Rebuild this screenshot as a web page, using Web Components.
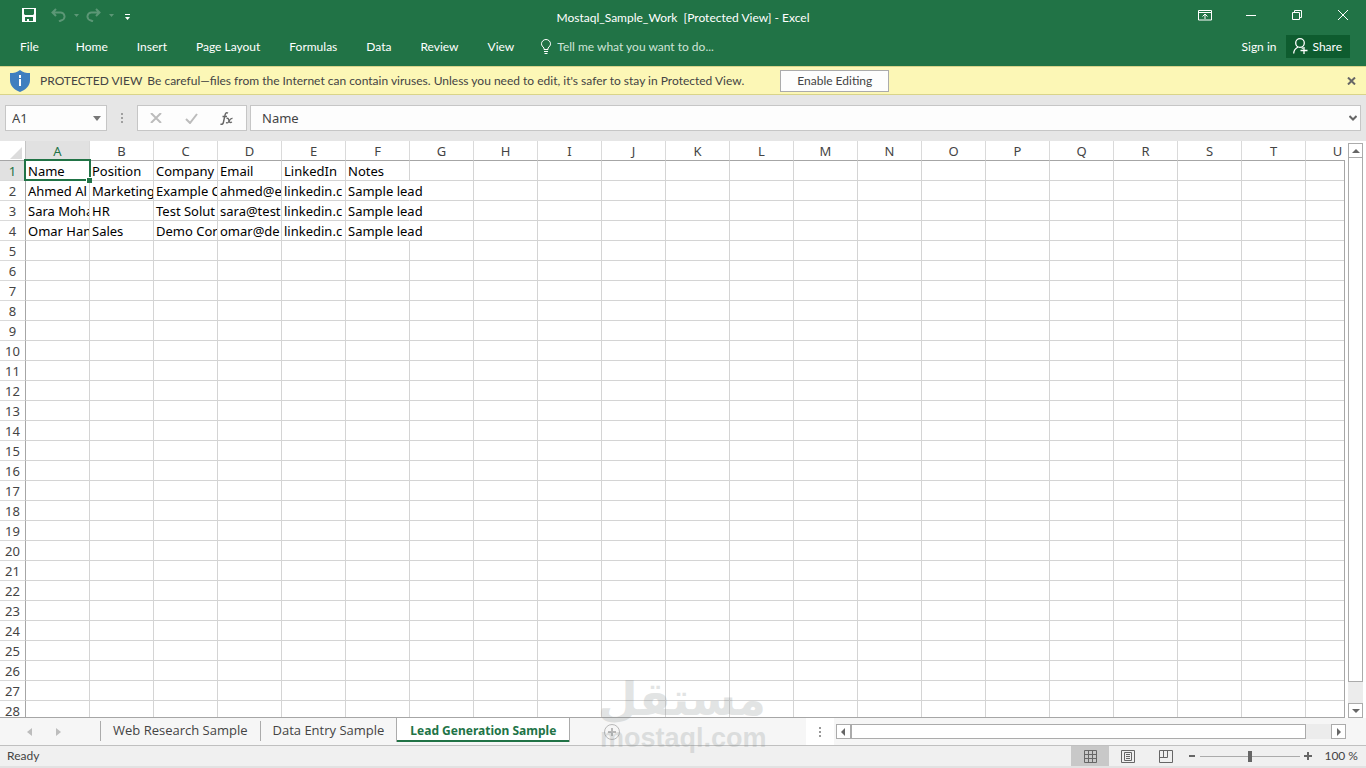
<!DOCTYPE html>
<html lang="en">
<head>
<meta charset="utf-8">
<title>Mostaql_Sample_Work - Excel</title>
<style>
  html, body { margin: 0; height: 100%; }
  body { font-family: Lato, "Noto Sans", sans-serif; font-size: 12px; color: #444; overflow: hidden; }
</style>
</head>
<body>
<excel-app></excel-app>
<script>
const base = `<style>
  *, *::before, *::after { box-sizing: border-box; }
  button { font: inherit; color: inherit; background: none; border: 0; padding: 0; margin: 0; }
  input { font: inherit; color: inherit; background: none; border: 0; padding: 0; margin: 0; min-width: 0; outline: 0; }
  a { color: inherit; text-decoration: none; }
  svg { display: block; fill: none; }
  button { display: flex; align-items: center; justify-content: center; }
</style>`;

function define(name, render) {
  customElements.define(name, class extends HTMLElement {
    constructor() {
      super();
      this.attachShadow({ mode: 'open' });
    }
    connectedCallback() {
      this.shadowRoot.innerHTML = base + render(this);
    }
  });
}

define('title-bar', () => `<style>
  :host { display: grid; grid-template-columns: 1fr auto 1fr; height: 34px; color: #fff; }
  .quick { display: flex; align-items: center; padding: 0 0 4px 22px; }
  .quick .undo { margin-left: 15px; }
  .quick .drop { width: 20px; }
  .quick .more { margin-left: 4px; padding-top: 4px; }
  .title { align-self: center; white-space: pre; }
  .window { display: flex; justify-content: flex-end; height: 30px; }
  .window button { width: 46px; }
</style>
<div class="quick">
  <button aria-label="Save"><svg width="14" height="14"><path fill="#fff" fill-rule="evenodd" d="M0 0h14v14H0zM2 1v5l1 1h8l1-1V1zM3 9v4h2v-2h2v2h4V9z"/></svg></button>
  <button class="undo" aria-label="Undo"><svg width="15" height="14" stroke="#5c9776" stroke-width="2"><path d="M5 1L1.500 4.500L5 8M2 4.500h7a4 4 0 0 1 1 8l-2 1"/></svg></button>
  <button class="drop" aria-label="Undo list"><svg width="5" height="3"><path fill="#5c9776" d="M0 0h5L2.500 3z"/></svg></button>
  <button aria-label="Redo"><svg width="15" height="14" stroke="#5c9776" stroke-width="2"><path d="M10 1l3.500 3.500L10 8M13 4.500H6a4 4 0 0 0-1 8l2 1"/></svg></button>
  <button class="drop" aria-label="Redo list"><svg width="5" height="3"><path fill="#5c9776" d="M0 0h5L2.500 3z"/></svg></button>
  <button class="more" aria-label="Customize"><svg width="5" height="6"><path fill="#fff" d="M0 0h5v1H0zM0 3h5L2.500 6z"/></svg></button>
</div>
<div class="title">Mostaql_Sample_Work  [Protected View] - Excel</div>
<div class="window">
  <button aria-label="Ribbon display options"><svg width="14" height="12" stroke="#fff"><path d="M.5 1.500h13v9.500H.5zM.5 3.500h13M7 10V5M4.500 7.500L7 5l2.500 2.500"/></svg></button>
  <button aria-label="Minimize"><svg width="10" height="1"><path fill="#fff" d="M0 0h10v1H0z"/></svg></button>
  <button aria-label="Restore"><svg width="10" height="10" stroke="#fff"><path d="M.5 2.500h7v7h-7zM2.500 2V.5h7v7H8"/></svg></button>
  <button aria-label="Close"><svg width="10" height="10" stroke="#fff"><path d="M0 0l10 10M10 0L0 10"/></svg></button>
</div>`);

define('ribbon-tabs', () => `<style>
  :host { display: flex; height: 32px; color: #fff; align-items: center; padding-bottom: 8px; }
  nav { display: flex; }
  nav a { padding: 0 29px 0 0; }
  nav a:first-child { padding: 0 37px 0 20px; }
  label { display: flex; align-items: center; gap: 6px; flex: 1; margin-left: -2px; }
  input { flex: 1; }
  input::placeholder { color: #cfe3d7; opacity: 1; }
  .share { background: #0e5c2f; height: 23px; padding: 0 8px 0 7px; gap: 4px; margin: 0 16px 0 10px; }
</style>
<nav><a href="#">File</a><a href="#">Home</a><a href="#">Insert</a><a href="#">Page Layout</a><a href="#">Formulas</a><a href="#">Data</a><a href="#">Review</a><a href="#">View</a></nav>
<label><svg width="10" height="15" stroke="#fff"><path d="M3 10.500V9C1.500 7.500.5 6.500.5 4.800a4.500 4.300 0 0 1 9 0C9.500 6.500 8.500 7.500 7 9v1.500zM3 12.500h4M3.500 14.500h3"/></svg>
<input placeholder="Tell me what you want to do..." aria-label="Tell me what you want to do"></label>
<a href="#">Sign in</a>
<button class="share"><svg width="15" height="16" stroke="#fff" stroke-width="1.300"><circle cx="7" cy="5" r="4.300"/><path d="M.7 15.500c0-3.500 1.500-5 4.300-6.500M8.500 9.500l1.500 1M7.500 12.500h7M11 9v7"/></svg>Share</button>`);

define('message-bar', () => `<style>
  :host { display: flex; align-items: center; height: 29px; background: #fcf7b6; border: solid #d9d48a; border-width: 1px 0; padding: 0 10px; }
  b { font-weight: 400; margin: 0 5px 0 10px; }
  .enable { margin-left: 36px; width: 109px; height: 22px; background: #fdfdfd; border: 1px solid #ababab; }
  .close { margin-left: auto; }
</style>
<svg width="20" height="22"><path fill="#3f7fbf" d="M10 0C7 2.500 4 3 0 3v7c0 6 4 9.500 10 12 6-2.500 10-6 10-12V3c-4 0-7-.5-10-3z"/><path fill="#fff" d="M9 5h2v3H9zM9 9h2v7H9z"/></svg>
<b>PROTECTED VIEW</b><span>Be careful—files from the Internet can contain viruses. Unless you need to edit, it's safer to stay in Protected View.</span>
<button class="enable">Enable Editing</button>
<button class="close" aria-label="Close message"><svg width="9" height="8" stroke="#666" stroke-width="2"><path d="M1 .5l7 7M8 .5l-7 7"/></svg></button>`);

define('formula-bar', () => `<style>
  :host { display: flex; align-items: center; height: 46px; background: #e6e6e6; padding: 0 5px; font-family: "Noto Sans", sans-serif; font-size: 13px; }
  .box { display: flex; align-items: center; height: 26px; background: #fdfdfd; border: 1px solid #c6c6c6; }
  .name { width: 102px; padding: 0 5px 0 6px; }
  .name input { flex: 1; }
  .dots { margin: 0 14px; }
  .tools { width: 110px; justify-content: space-between; padding: 0 12px; margin-right: 3px; }
  .text { flex: 1; padding: 0 3px 0 11px; }
  .text input { flex: 1; }
</style>
<div class="box name"><input value="A1" aria-label="Name box"><button aria-label="Names"><svg width="8" height="5"><path fill="#777" d="M0 0h8L4 5z"/></svg></button></div>
<svg class="dots" width="2" height="10"><path fill="#a0a0a0" d="M0 0h2v2H0zM0 4h2v2H0zM0 8h2v2H0z"/></svg>
<div class="box tools">
  <button aria-label="Cancel"><svg width="12" height="10" stroke="#bcbcbc" stroke-width="2"><path d="M1 0l10 10M11 0L1 10"/></svg></button>
  <button aria-label="Enter"><svg width="13" height="11" stroke="#bcbcbc" stroke-width="2"><path d="M1 6l4 4 7-9"/></svg></button>
  <button aria-label="Insert function"><svg width="14" height="13" stroke="#666"><path stroke-width="1.400" d="M8 1.200C6 0 5.200 1.500 4.800 4L3.500 10C3 12.300 2 12.700.5 12M2.500 4.500h4.500"/><path stroke-width="1.300" d="M6.500 6.500c2-1 2 1 2.500 2.500s1 2 3 1M12.500 6.500c-2-.5-3 2-4 3.500s-1.500 1-2.500.5"/></svg></button>
</div>
<div class="box text"><input value="Name" aria-label="Formula"><button aria-label="Expand formula bar"><svg width="8" height="6" stroke="#666" stroke-width="2"><path d="M.5 1L4 4.500 7.500 1"/></svg></button></div>`);

const rows = [
  ['Name', 'Position', 'Company', 'Email', 'LinkedIn', 'Notes'],
  ['Ahmed Al', 'Marketing', 'Example C', 'ahmed@e', 'linkedin.c', 'Sample lead'],
  ['Sara Moha', 'HR', 'Test Solut', 'sara@test', 'linkedin.c', 'Sample lead'],
  ['Omar Han', 'Sales', 'Demo Cor', 'omar@de', 'linkedin.c', 'Sample lead']
];
const columns = [...'ABCDEFGHIJKLMNOPQRSTU'];

define('sheet-grid', () => `<style>
  :host { display: block; overflow: hidden; min-height: 0; background: #fff; position: relative; border-bottom: 1px solid #a6a6a6; font-family: "Noto Sans", sans-serif; }
  :host::after { content: ""; position: absolute; top: 19px; right: 0; bottom: 0; border-right: 1px solid #a6a6a6; }
  table { table-layout: fixed; border-collapse: separate; border-spacing: 0; width: 1370px; font-size: 13px; line-height: 18px; }
  th, td { padding: 1px 0 0; height: 20px; white-space: nowrap; overflow: hidden; font-weight: 400; }
  col { width: 64px; }
  col:first-child { width: 26px; }
  thead th { border-right: 1px solid #dadada; border-bottom: 1px solid #a6a6a6; text-align: center; }
  thead th:first-child { border-right-color: #c4c4c4; }
  thead svg { margin: 3px 0 0 10px; }
  tbody th { border-right: 1px solid #a6a6a6; border-bottom: 1px solid #dadada; text-align: center; }
  td { border: solid #d4d4d4; border-width: 0 1px 1px 0; padding-left: 2px; color: #000; }
  td.spill { overflow: visible; border-right-color: transparent; }
  td.active { overflow: visible; position: relative; }
  td.active::before { content: ""; position: absolute; inset: -2px -2px -1px -2px; border: 2px solid #217346; }
  td.active::after { content: ""; position: absolute; right: -3px; bottom: -3px; width: 6px; height: 6px; background: #217346; border: solid #fff; border-width: 1px 0 0 1px; }
  th.on { background: #e1e1e1; color: #217346; }
</style>
<table>
  <colgroup><col>${columns.map(() => '<col>').join('')}</colgroup>
  <thead><tr><th><svg width="12" height="12"><path fill="#dcdcdc" d="M12 0v12H0z"/></svg></th>${columns.map((c, i) => `<th scope="col"${i ? '' : ' class="on"'}>${c}</th>`).join('')}</tr></thead>
  <tbody>${Array.from({ length: 28 }, (_, r) => `<tr><th scope="row"${r ? '' : ' class="on"'}>${r + 1}</th>${columns.map((_, c) => {
    const text = rows[r] && rows[r][c] || '';
    const kind = r === 0 && c === 0 ? 'active' : r > 0 && r < 4 && c === 5 ? 'spill' : '';
    return `<td${kind ? ` class="${kind}"` : ''}>${text}</td>`;
  }).join('')}</tr>`).join('')}</tbody>
</table>`);

define('scroll-bar', el => {
  const v = el.hasAttribute('vertical');
  const back = v ? 'M0 6h8L4 2z' : 'M6 0v8L2 4z';
  const fore = v ? 'M0 2h8L4 6z' : 'M2 0v8l4-4z';
  return `<style>
  :host { display: flex; flex-direction: ${v ? 'column' : 'row'}; background: #ececec; }
  button, .thumb { border: 1px solid #ababab; background: #fff; }
  button { flex: none; width: 15px; height: 15px; }
  .thumb { flex: 1; margin: ${v ? '-1px 0 21px' : '0 25px 0 0'}; }
</style>
<button aria-label="Scroll back"><svg width="8" height="8"><path fill="#666" d="${back}"/></svg></button>
<div class="thumb"></div>
<button aria-label="Scroll forward"><svg width="8" height="8"><path fill="#666" d="${fore}"/></svg></button>`;
});

define('sheet-tabs', () => `<style>
  :host { display: flex; height: 28px; background: #f6f6f6; border-bottom: 1px solid #c0c0c0; font-family: "Open Sans", "Noto Sans", sans-serif; font-size: 13px; }
  .arrows { display: flex; width: 100px; padding: 0 39px 0 27px; justify-content: space-between; }
  .tab { height: 20px; margin-top: 3px; padding: 0 12px 2px; border-left: 1px solid #ababab; }
  .tab.on { height: 25px; margin: -1px 0 0; padding: 1px 13px 0; background: #fff; border: solid #ababab; border-width: 0 1px; box-shadow: inset 0 -2px #217346; color: #217346; font: 700 12px "Noto Sans", sans-serif; }
  .add { width: 16px; margin-left: 34px; }
  .split { margin-left: auto; width: 28px; background: #fff; }
  scroll-bar { width: calc(38% - 9px); margin: 6px 20px 6px 2px; }
</style>
<div class="arrows">
  <button aria-label="Previous sheet"><svg width="5" height="8"><path fill="#bdbdbd" d="M5 0v8L0 4z"/></svg></button>
  <button aria-label="Next sheet"><svg width="5" height="8"><path fill="#bdbdbd" d="M0 0v8l5-4z"/></svg></button>
</div>
<button class="tab">Web Research Sample</button><button class="tab">Data Entry Sample</button><button class="tab on">Lead Generation Sample</button>
<button class="add" aria-label="New sheet"><svg width="16" height="16" stroke="#b8b8b8"><circle cx="8" cy="8" r="7.500"/><path stroke-width="2" d="M8 4v8M4 8h8"/></svg></button>
<button class="split" aria-label="Resize tabs"><svg width="2" height="10"><path fill="#999" d="M0 0h2v2H0zM0 4h2v2H0zM0 8h2v2H0z"/></svg></button>
<scroll-bar></scroll-bar>`);

define('status-bar', () => `<style>
  :host { display: flex; align-items: center; height: 22px; background: #f0f0f0; border-bottom: 2px solid #e2e2e2; }
  .ready { flex: 1; padding: 0 0 2px 7px; }
  .view { width: 38px; height: 20px; }
  .view.on { background: #c8c8c8; }
  input { appearance: none; width: 100px; height: 11px; margin: 0 4px; background: linear-gradient(#ababab, #ababab) center / 100% 1px no-repeat; }
  input::-webkit-slider-thumb { appearance: none; width: 4px; height: 11px; background: #666; }
  .minus { margin-left: 3px; }
  output { width: 54px; text-align: right; padding: 0 8px 2px 0; white-space: nowrap; }
</style>
<span class="ready">Ready</span>
<button class="view on" aria-label="Normal"><svg width="13" height="13" stroke="#666"><path d="M.5.5h12v12H.5zM4.500 0v13M8.500 0v13M0 4.500h13M0 8.500h13"/></svg></button>
<button class="view" aria-label="Page layout"><svg width="14" height="13" stroke="#666"><path d="M.5.5h13v12H.5zM3.500 2.500h7v8h-7zM5 4.500h4M5 6.500h4M5 8.500h4"/></svg></button>
<button class="view" aria-label="Page break preview"><svg width="14" height="13" stroke="#666"><path d="M.5.5h13v12H.5zM4.500 0v7.500M8.500 0v7.500H0"/></svg></button>
<button class="minus" aria-label="Zoom out"><svg width="8" height="8"><path fill="#666" d="M1 3h6v2H1z"/></svg></button>
<input type="range" value="50" aria-label="Zoom">
<button aria-label="Zoom in"><svg width="8" height="8"><path fill="#666" d="M0 3h3V0h2v3h3v2H5v3H3V5H0z"/></svg></button>
<output>100 %</output>`);

define('water-mark', () => `<style>
  :host { display: block; width: 166px; color: #8a9090; opacity: .24; text-align: center; font-weight: 700; pointer-events: none; }
  .ar { font: 700 46px/48px "DejaVu Sans", sans-serif; height: 48px; white-space: nowrap; }
  .en { font: 700 27px/30px "Liberation Sans", sans-serif; }
</style>
<div class="ar" lang="ar" dir="rtl">مستقل</div><div class="en">mostaql.com</div>`);

define('excel-app', () => `<style>
  :host { display: flex; flex-direction: column; height: 100vh; position: relative; }
  header { background: #217346; }
  main { flex: 1; min-height: 0; display: grid; grid-template: minmax(0, 1fr) / minmax(0, 1fr) 21px; background: #fff; }
  scroll-bar { margin: 2px 3px 0; }
  water-mark { position: absolute; left: calc(50% - 83px); bottom: 15px; }
</style>
<header><title-bar></title-bar><ribbon-tabs></ribbon-tabs></header>
<message-bar></message-bar>
<formula-bar></formula-bar>
<main><sheet-grid></sheet-grid><scroll-bar vertical></scroll-bar></main>
<sheet-tabs></sheet-tabs>
<status-bar></status-bar>
<water-mark></water-mark>`);
</script>
</body>
</html>
